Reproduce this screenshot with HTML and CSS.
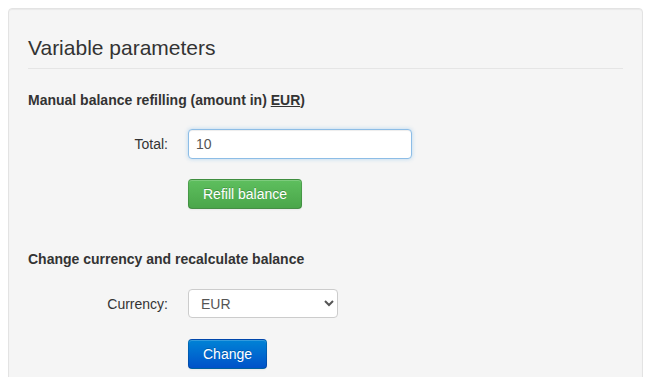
FILE: index.html
```html
<!DOCTYPE html>
<html lang="en">
<head>
    <meta charset="UTF-8">
    <meta name="viewport" content="width=device-width, initial-scale=1.0">
    <title>Variable parameters</title>
    <link rel="stylesheet" href="styles.css">
</head>
<body>
    <div class="well">
        <form class="form-horizontal">
            <fieldset>
                <legend>Variable parameters</legend>

                <h4 class="section-title">Manual balance refilling (amount in) <u>EUR</u>)</h4>
                <div class="control-group">
                    <label class="control-label" for="total">Total:</label>
                    <div class="controls">
                        <input type="text" id="total" class="input-total focused" value="10">
                    </div>
                </div>
                <div class="form-actions">
                    <button type="button" class="btn btn-success">Refill balance</button>
                </div>

                <h4 class="section-title section-gap">Change currency and recalculate balance</h4>
                <div class="control-group currency-group">
                    <label class="control-label" for="currency">Currency:</label>
                    <div class="controls">
                        <select id="currency" class="select-currency">
                            <option>EUR</option>
                            <option>USD</option>
                            <option>RUB</option>
                        </select>
                    </div>
                </div>
                <div class="form-actions currency-actions">
                    <button type="button" class="btn btn-primary">Change</button>
                </div>
            </fieldset>
        </form>
    </div>
</body>
</html>
```

FILE: styles.css
```css
body {
    margin: 8px;
    font-family: "Liberation Sans", Arial, sans-serif;
    font-size: 14px;
    line-height: 20px;
    color: #333;
    background: #fff;
}

.well {
    background: #f5f5f5;
    border: 1px solid #e3e3e3;
    border-radius: 4px;
    padding: 19px 19px 40px;
    box-shadow: inset 0 1px 1px rgba(0, 0, 0, 0.05);
}

fieldset {
    border: 0;
    margin: 0;
    padding: 0;
    min-width: 0;
}

legend {
    display: block;
    width: 100%;
    padding: 0;
    margin: 0 0 21px;
    font-size: 21px;
    line-height: 40px;
    color: #333;
    border-bottom: 1px solid #e5e5e5;
}

.section-title {
    margin: 0;
    font-size: 14px;
    line-height: 20px;
    font-weight: bold;
}

.section-title u {
    text-decoration: underline;
}

.section-gap {
    margin-top: 40px;
}

.control-group {
    display: flex;
    align-items: center;
    gap: 20px;
    margin-top: 19px;
}

.currency-group {
    margin-top: 20px;
}

.control-label {
    width: 140px;
    text-align: right;
}

.controls {
    display: flex;
}

.input-total {
    box-sizing: border-box;
    width: 224px;
    height: 30px;
    padding: 4px 7px;
    font-family: inherit;
    font-size: 14px;
    color: #555;
    background: #fff;
    border: 1px solid #ccc;
    border-radius: 4px;
    outline: none;
}

.input-total.focused {
    border-color: #8dbde6;
    box-shadow: inset 0 1px 1px rgba(0, 0, 0, 0.075), 0 0 4px rgba(102, 175, 233, 0.45);
}

.select-currency {
    box-sizing: border-box;
    width: 150px;
    height: 29px;
    padding: 0 6px 0 8px;
    font-family: inherit;
    font-size: 14px;
    color: #555;
    background: #fff;
    border: 1px solid #ccc;
    border-radius: 4px;
}

.form-actions {
    padding-left: 160px;
    margin-top: 20px;
}

.currency-actions {
    margin-top: 21px;
}

.btn {
    box-sizing: border-box;
    height: 30px;
    padding: 0 14px;
    font-family: inherit;
    font-size: 14px;
    line-height: 28px;
    color: #fff;
    text-shadow: 0 -1px 0 rgba(0, 0, 0, 0.2);
    border: 1px solid rgba(0, 0, 0, 0.15);
    border-bottom-color: rgba(0, 0, 0, 0.25);
    border-radius: 4px;
    box-shadow: inset 0 1px 0 rgba(255, 255, 255, 0.2), 0 1px 2px rgba(0, 0, 0, 0.05);
    cursor: pointer;
}

.btn-success {
    background: linear-gradient(to bottom, #5ebf5e, #4aa64a);
}

.btn-primary {
    background: linear-gradient(to bottom, #0083d6, #0052c9);
}
```
